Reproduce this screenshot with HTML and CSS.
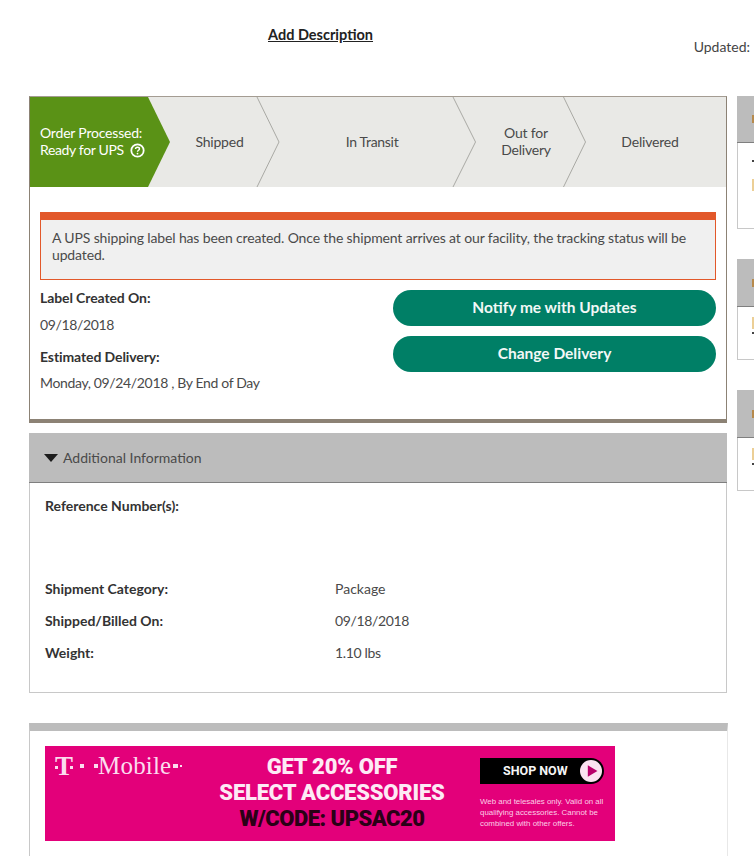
FILE: index.html
```html
<!DOCTYPE html>
<html lang="en">
<head>
<meta charset="utf-8">
<title>Tracking</title>
<link rel="stylesheet" href="styles.css">
</head>
<body>
<div class="page">
  <header class="top">
    <a class="add-desc">Add Description</a>
    <span class="updated">Updated:</span>
  </header>
  <div class="columns">
    <main class="main">
      <section class="card status">
        <div class="steps">
          <svg class="steps-art" viewBox="0 0 697 90" width="697" height="90" aria-hidden="true">
            <rect width="697" height="90" fill="#e9e9e6"/>
            <polyline points="227,0 249,45 227,90" fill="none" stroke="#a9a9a4"/>
            <polyline points="423,0 445.5,45 423,90" fill="none" stroke="#a9a9a4"/>
            <polyline points="533.5,0 555.5,45 533.5,90" fill="none" stroke="#a9a9a4"/>
            <polygon points="0,0 118,0 140,45 118,90 0,90" fill="#5a9216"/>
          </svg>
          <div class="step-row">
            <div class="step step-done"><span class="step-line">Order Processed:</span><span class="step-line step-line-tight">Ready for UPS
              <svg class="help" viewBox="0 0 16 16" width="15" height="15" aria-hidden="true"><circle cx="8" cy="8" r="6.6" fill="none" stroke="#fff" stroke-width="1.9"/><path d="M5.9 6.5c0-1.3 1-2 2.1-2s2.1.7 2.1 1.8c0 1.5-2.1 1.4-2.1 2.9" fill="none" stroke="#fff" stroke-width="1.5"/><circle cx="8" cy="11.3" r=".95" fill="#fff"/></svg></span>
            </div>
            <div class="step step-ship">Shipped</div>
            <div class="step step-transit">In Transit</div>
            <div class="step step-out"><span class="step-line">Out for</span><span class="step-line">Delivery</span></div>
            <div class="step step-end">Delivered</div>
          </div>
        </div>
        <div class="status-body">
          <div class="alert">A UPS shipping label has been created. Once the shipment arrives at our facility, the tracking status will be updated.</div>
          <div class="details">
            <dl class="dates">
              <dt>Label Created On:</dt>
              <dd>09/18/2018</dd>
              <dt>Estimated Delivery:</dt>
              <dd>Monday, 09/24/2018 , By End of Day</dd>
            </dl>
            <div class="actions">
              <a class="pill">Notify me with Updates</a>
              <a class="pill">Change Delivery</a>
            </div>
          </div>
        </div>
      </section>

      <section class="card info">
        <div class="info-head"><span class="caret"></span>Additional Information</div>
        <div class="info-body">
          <div class="info-row info-ref"><span class="info-key">Reference Number(s):</span><span></span></div>
          <div class="info-row"><span class="info-key">Shipment Category:</span><span>Package</span></div>
          <div class="info-row"><span class="info-key">Shipped/Billed On:</span><span class="info-num">09/18/2018</span></div>
          <div class="info-row"><span class="info-key">Weight:</span><span class="info-num">1.10 lbs</span></div>
        </div>
      </section>

      <section class="card promo">
        <div class="ad">
          <div class="ad-logo"><span class="ad-t">T</span><i class="ad-dot ad-dot-a"></i><i class="ad-dot ad-dot-b"></i><span class="ad-name">Mobile</span><i class="ad-dot ad-dot-c"></i><i class="ad-dot ad-dot-d"></i></div>
          <div class="ad-copy">
            <div>GET 20% OFF</div>
            <div>SELECT ACCESSORIES</div>
            <div class="ad-code">W/CODE: UPSAC20</div>
          </div>
          <div class="ad-side">
            <div class="ad-shop"><span>SHOP NOW</span>
              <svg viewBox="0 0 24 24" width="24" height="24" aria-hidden="true"><circle cx="12" cy="12" r="12" fill="#fbe3f1"/><path d="M8.5 5.8 19 12 8.5 18.2z" fill="#b8006a"/></svg>
            </div>
            <p class="ad-note">Web and telesales only. Valid on all qualifying accessories. Cannot be combined with other offers.</p>
          </div>
        </div>
      </section>
    </main>
    <aside class="side">
      <div class="side-card side-a"><div class="side-head"><i class="mark mark-dark"></i></div><div class="side-body"><i class="line"></i><i class="mark"></i></div></div>
      <div class="side-card side-b"><div class="side-head"><i class="mark mark-dark"></i></div><div class="side-body side-body-b"><i class="mark"></i><i class="line"></i></div></div>
      <div class="side-card side-b"><div class="side-head"><i class="mark mark-dark"></i></div><div class="side-body side-body-b"><i class="mark"></i><i class="line"></i></div></div>
    </aside>
  </div>
</div>
</body>
</html>
```
FILE: styles.css
```css
* { box-sizing: border-box; }
html, body { margin: 0; padding: 0; }
body {
  width: 754px;
  height: 856px;
  overflow: hidden;
  background: #fff;
  color: #4a4a4a;
  font-family: Lato, "Open Sans", "Liberation Sans", sans-serif;
  font-size: 14px;
}
.page { padding-left: 29px; }
.top { position: relative; height: 96px; }
.add-desc {
  position: absolute; left: 239px; top: 26px;
  font-size: 14.5px; font-weight: 700; color: #222;
  text-decoration: underline;
}
.updated { position: absolute; right: 4px; top: 38px; font-size: 14px; color: #444; }
.columns { display: flex; gap: 10px; align-items: flex-start; width: 740px; }
.main { width: 698px; flex: none; }
.card { background: #fff; }

.status { border: 1px solid #8c8275; border-bottom: 4px solid #8c8275; border-top-color: #a49c92; height: 327px; }
.steps { position: relative; height: 90px; width: 696px; overflow: hidden; }
.steps-art { display: block; }
.step-row { position: absolute; inset: 0; display: flex; }
.step { display: flex; flex-direction: column; align-items: center; justify-content: center; padding-bottom: 2px; text-align: center; font-size: 14px; line-height: 17px; letter-spacing: -0.2px; color: #4a4a4a; }
.step-line { display: block; height: 17px; white-space: nowrap; }
.step-line-tight { letter-spacing: -0.35px; }
.step-done { width: 137px; padding-left: 10px; align-items: flex-start; text-align: left; color: #fff; }
.help { vertical-align: -3px; margin-left: 3px; }
.step-ship { width: 105px; }
.step-transit { width: 204px; padding-right: 4px; letter-spacing: -0.3px; }
.step-out { width: 112px; padding-right: 12px; }
.step-end { width: 138px; padding-right: 14px; }

.status-body { padding: 25px 10px 0; }
.alert {
  height: 68px;
  padding: 9px 10px 0 11px;
  background: #f0f0f0;
  border: 1px solid #e2582a;
  border-top: 8px solid #e2582a;
  font-size: 14px; line-height: 17px; letter-spacing: -0.14px; color: #4a4a4a;
}
.details { display: flex; justify-content: space-between; }
.dates { margin: 8px 0 0; }
.dates dt { font-weight: 700; color: #333; line-height: 19px; letter-spacing: -0.1px; }
.dates dd { margin: 8px 0 13px; line-height: 19px; letter-spacing: -0.35px; }
.dates dd:last-child { margin-top: 7px; }
.actions { width: 323px; padding-top: 10px; display: flex; flex-direction: column; gap: 10px; }
.pill {
  display: flex; align-items: center; justify-content: center;
  height: 36px; border-radius: 18px; padding-bottom: 2px;
  background: #007f66; color: #f2f8f6;
  font-size: 15.5px; font-weight: 700;
}

.info { margin-top: 10px; border: 1px solid #c8c8c8; border-top: 0; height: 260px; }
.info-head {
  display: flex; align-items: center;
  height: 50px; margin: 0 -1px;
  padding-left: 15px;
  background: #bcbcbc;
  border-bottom: 1px solid #7f7f7f;
  color: #4a4a4a;
}
.caret { width: 0; height: 0; margin-right: 5px; border: 7.5px solid transparent; border-top: 8px solid #1c1c1c; border-bottom: 0; }
.info-body { padding: 12px 15px 0; }
.info-row { display: flex; height: 32px; align-items: center; }
.info-ref { height: 21px; margin-bottom: 56px; }
.info-key { width: 290px; font-weight: 700; color: #333; }
.info-num { letter-spacing: -0.35px; }

.promo { margin-top: 30px; height: 140px; border-left: 1px solid #c8c8c8; border-right: 1px solid #e8e8e8; border-top: 8px solid #bcbcbc; padding: 15px 0 0 15px; margin-right: -1px; }
.ad {
  display: flex;
  width: 570px; height: 95px;
  background: #e3007a; color: #fff;
}
.ad-logo { display: flex; align-items: center; flex: none; height: 30px; width: 160px; margin-top: 5px; padding-left: 10px; font-family: "Liberation Serif", serif; font-size: 25px; line-height: 30px; white-space: nowrap; color: #fbdcee; }
.ad-t { position: relative; flex: none; width: 18px; font-size: 27px; font-weight: 700; }
.ad-t::before, .ad-t::after { content: ""; position: absolute; top: 15px; width: 3px; height: 3px; background: #fbdcee; }
.ad-t::before { left: 0; }
.ad-t::after { right: 0; }
.ad-name { margin-left: 0; letter-spacing: 0.2px; }
.ad-dot { display: block; flex: none; width: 4px; height: 4px; background: #fbdcee; }
.ad-dot-a { margin-left: 7px; }
.ad-dot-b { margin-left: 10px; }
.ad-dot-c { margin-left: 2px; width: 5px; }
.ad-dot-d { margin-left: 2px; width: 2px; height: 2px; }
.ad-copy { flex: none; width: 276px; margin-left: -11px; padding-top: 8px; text-align: center; font-family: Roboto, "Liberation Sans", sans-serif; font-weight: 900; font-size: 22px; line-height: 26px; letter-spacing: -0.2px; color: #fdeaf5; }
.ad-code { color: #2a0016; letter-spacing: -0.5px; }
.ad-side { flex: none; width: 124px; margin-left: 10px; padding-top: 12px; }
.ad-shop {
  display: flex; align-items: center; justify-content: space-between;
  height: 26px; padding: 0 2px 1px 23px;
  background: #000; border-radius: 0 13px 13px 0;
  font-family: Roboto, "Liberation Sans", sans-serif; font-weight: 700; font-size: 12.5px; color: #f5f5f5;
}
.ad-shop svg { width: 22px; height: 22px; }
.ad-note { margin: 12px 0 0; font-family: "Liberation Sans", sans-serif; font-size: 7.9px; line-height: 11px; color: #fbcfe7; }

.side { flex: none; width: 40px; }
.side-card { border: 1px solid #c8c8c8; border-right: 0; margin-bottom: 30px; background: #fff; }
.side-head { height: 47px; background: #bcbcbc; border-bottom: 1px solid #7f7f7f; display: flex; align-items: center; padding-left: 15px; margin: -1px 0 0 -1px; }
.side-a { height: 133px; }
.side-b { height: 101px; }
.side-b .side-head { height: 48px; }
.side-body { padding: 17px 0 0 14px; display: flex; flex-direction: column; gap: 17px; }
.side-body-b { padding-top: 10px; gap: 3px; }
.mark { display: block; width: 3px; height: 12px; background: #eccf96; }
.mark-dark { height: 8px; background: #b78a4c; }
.line { display: block; width: 3px; height: 2px; background: #444; }
```
